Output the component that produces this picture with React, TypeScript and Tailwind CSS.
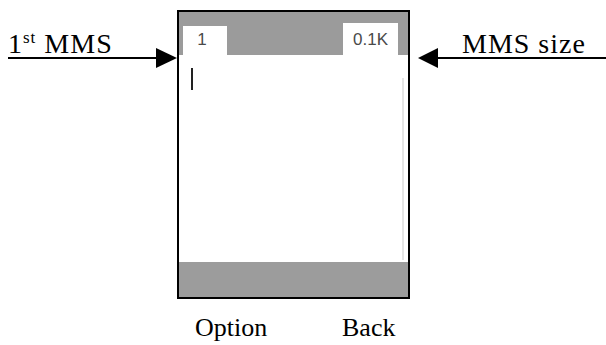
export default function App() {
  return (
    <div className="w-[606px] h-[345px] bg-white font-['Liberation_Serif',serif] text-black overflow-hidden">
      <div className="flex items-start pt-[10px]">
        {/* left label */}
        <div className="w-[177px] flex flex-col pt-[20px]">
          <div className="pl-[8px] text-[28px] leading-[28px] h-[28px] tracking-[1px] whitespace-nowrap">
            1<sup className="text-[17px] relative -top-[10px]">st</sup> MMS
          </div>
          <svg width="177" height="20" viewBox="0 0 177 20" className="block -mt-[10px]">
            <line x1="8" y1="10" x2="160" y2="10" stroke="black" strokeWidth="2" />
            <polygon points="156,0 177,10 156,20" fill="black" />
          </svg>
        </div>

        {/* phone screen */}
        <div className="w-[233px] h-[289px] border-2 border-black flex flex-col bg-white">
          <div className="h-[43px] bg-[#9b9b9b] flex items-end justify-between pl-[4px] pr-[10px]">
            <div className="w-[44px] h-[29px] bg-white flex items-start justify-center pt-[5px] pr-[6px] font-['Liberation_Sans',sans-serif] text-[17px] leading-[17px] text-[#4a4a4a]">
              1
            </div>
            <div className="w-[55px] h-[32px] bg-white flex items-start justify-center pt-[8px] font-['Liberation_Sans',sans-serif] text-[17px] leading-[17px] text-[#4a4a4a]">
              0.1K
            </div>
          </div>
          <div className="flex-1 flex pl-[12px] pt-[13px] pr-[4px] pb-[2px]">
            <div className="w-[2px] h-[22px] bg-[#222]" />
            <div className="flex-1" />
            <div className="w-[2px] mt-[10px] bg-[#e4e4e4]" />
          </div>
          <div className="h-[35px] bg-[#9c9c9c]" />
        </div>

        {/* right label */}
        <div className="flex-1 flex flex-col pt-[20px]">
          <div className="pl-[52px] text-[28px] leading-[28px] h-[28px] tracking-[1px] whitespace-nowrap">MMS size</div>
          <svg width="196" height="20" viewBox="0 0 196 20" className="block -mt-[10px]">
            <polygon points="8,10 28,0 28,20" fill="black" />
            <line x1="26" y1="10" x2="196" y2="10" stroke="black" strokeWidth="2" />
          </svg>
        </div>
      </div>

      {/* soft keys */}
      <div className="flex pt-[16px] text-[26px] leading-[26px]">
        <div className="w-[195px]" />
        <div className="w-[147px]">Option</div>
        <div>Back</div>
      </div>
    </div>
  );
}
